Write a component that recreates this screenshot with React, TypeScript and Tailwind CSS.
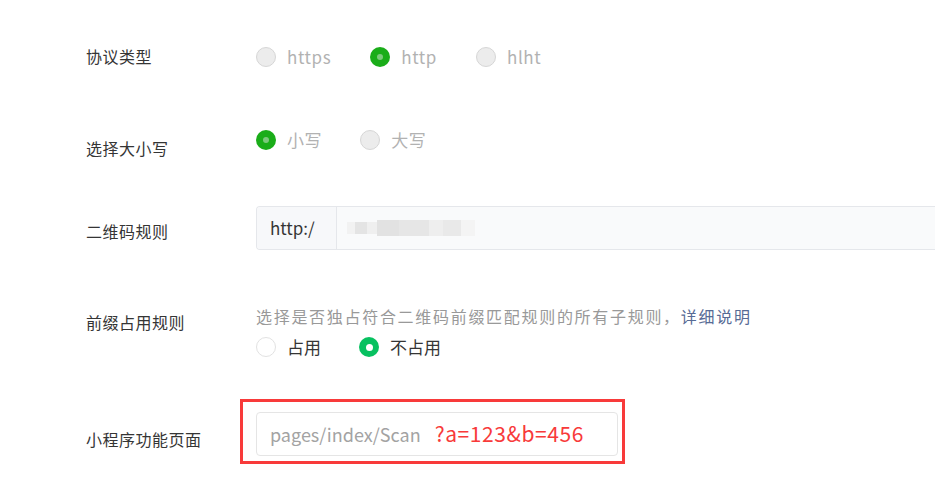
import React from "react";

const font = { fontFamily: '"Noto Sans CJK SC", "Noto Sans", sans-serif' };

function GrayRadio({ checked, label }: { checked?: boolean; label: string }) {
  return (
    <div className="flex items-center">
      {checked ? (
        <span className="w-[20px] h-[20px] rounded-full bg-[#1aad19] flex items-center justify-center">
          <span className="w-[6px] h-[6px] rounded-full bg-[#7cc97c]" />
        </span>
      ) : (
        <span className="w-[20px] h-[20px] rounded-full bg-[#ececec] border border-[#d6d6d6]" />
      )}
      <span className="ml-[11px] text-[17px] leading-[22px] tracking-[0.6px] text-[#b2b2b2]">{label}</span>
    </div>
  );
}

function GreenRadio({ checked, label }: { checked?: boolean; label: string }) {
  return (
    <div className="flex items-center">
      {checked ? (
        <span className="w-[20px] h-[20px] rounded-full bg-[#07c160] flex items-center justify-center">
          <span className="w-[7px] h-[7px] rounded-full bg-white" />
        </span>
      ) : (
        <span className="w-[20px] h-[20px] rounded-full bg-white border border-[#e2e2e2]" />
      )}
      <span className="ml-[11px] text-[17px] leading-[22px] text-[#353535]">{label}</span>
    </div>
  );
}

export default function App() {
  return (
    <div className="w-[935px] h-[502px] bg-white overflow-hidden pl-[86px]" style={font}>
      {/* Row 1 */}
      <div className="flex items-center pt-[45px] h-[67px]">
        <div className="w-[170px] text-[16px] leading-[22px] tracking-[0.5px] text-[#353535]">协议类型</div>
        <div className="flex items-center pt-[2px]">
          <GrayRadio label="https" />
          <div className="ml-[39px]"><GrayRadio checked label="http" /></div>
          <div className="ml-[39px]"><GrayRadio label="hlht" /></div>
        </div>
      </div>

      {/* Row 2 */}
      <div className="flex items-start mt-[62px]">
        <div className="w-[170px] mt-[8px] text-[16px] leading-[22px] tracking-[0.5px] text-[#353535]">选择大小写</div>
        <div className="flex items-center">
          <GrayRadio checked label="小写" />
          <div className="ml-[38px]"><GrayRadio label="大写" /></div>
        </div>
      </div>

      {/* Row 3 */}
      <div className="flex items-center mt-[47px]">
        <div className="w-[170px] pt-[6px] text-[16px] leading-[22px] tracking-[0.5px] text-[#353535]">二维码规则</div>
        <div className="flex-1 h-[44px] flex items-stretch border border-r-0 border-[#e5e7eb] rounded-l-[4px] bg-[#f9fafb] overflow-hidden">
          <div className="w-[80px] flex items-center pl-[13px] border-r border-[#e5e7eb] text-[17px] text-[#353535] bg-[#f7f8fa]">
            http:/
          </div>
          <div className="flex items-center">
            <div className="ml-[10px] w-[8px] h-[12px] bg-[#f2f2f2]" />
            <div className="w-[12px] h-[12px] bg-[#e4e4e4]" />
            <div className="w-[10px] h-[12px] bg-[#efefef]" />
            <div className="w-[22px] h-[16px] bg-[#e2e2e2]" />
            <div className="w-[30px] h-[16px] bg-[#e6e6e6]" />
            <div className="w-[14px] h-[16px] bg-[#eeeeee]" />
            <div className="w-[18px] h-[16px] bg-[#e9e9e9]" />
            <div className="w-[14px] h-[16px] bg-[#f4f4f4]" />
          </div>
        </div>
      </div>

      {/* Row 4 */}
      <div className="flex items-start mt-[55px]">
        <div className="w-[170px] mt-[6px] text-[16px] leading-[22px] tracking-[0.5px] text-[#353535]">前缀占用规则</div>
        <div className="flex flex-col">
          <div className="text-[16px] leading-[22px] text-[#999999] tracking-[1.7px]">
            选择是否独占符合二维码前缀匹配规则的所有子规则，<span className="text-[#576b95]">详细说明</span>
          </div>
          <div className="flex items-center mt-[9px]">
            <GreenRadio label="占用" />
            <div className="ml-[38px]"><GreenRadio checked label="不占用" /></div>
          </div>
        </div>
      </div>

      {/* Row 5 */}
      <div className="flex items-center mt-[41px]">
        <div className="w-[170px] pt-[14px] text-[16px] leading-[22px] tracking-[0.5px] text-[#353535]">小程序功能页面</div>
        <div className="ml-[-16px] border-[3px] border-[#f83a3a] pl-[13px] pt-[10px] pr-[4px] pb-[5px]">
          <div className="w-[362px] h-[44px] border border-[#e5e5e5] rounded-[4px] flex items-center pl-[13px] bg-white">
            <span className="text-[18px] text-[#a3a3a3]">pages/index/Scan</span>
            <span className="ml-[14px] text-[21px] tracking-[0.6px] text-[#f83a3a]">?a=123&amp;b=456</span>
          </div>
        </div>
      </div>
    </div>
  );
}
